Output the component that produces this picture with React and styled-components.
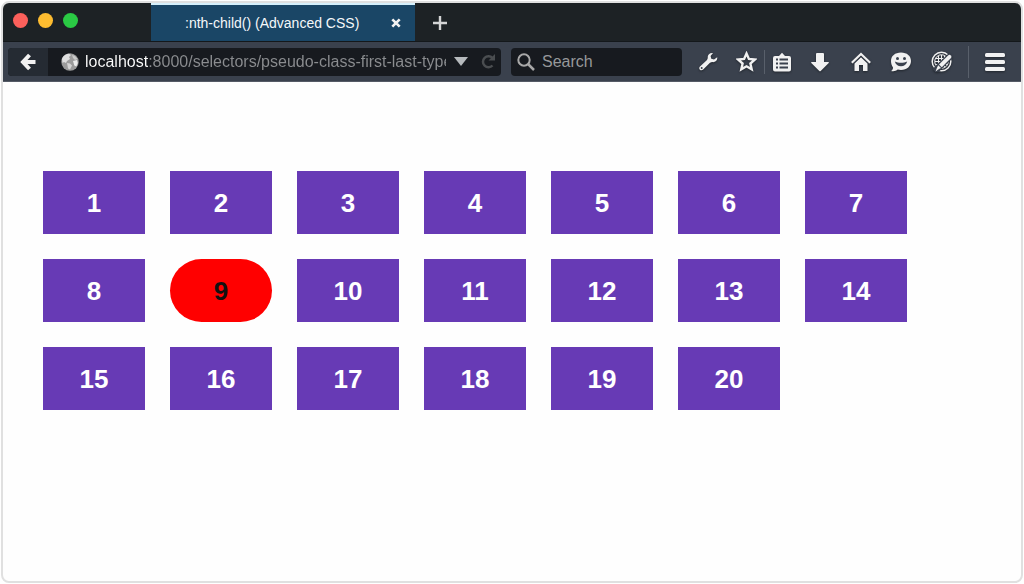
import React from "react";
import styled, { createGlobalStyle } from "styled-components";

const GlobalStyle = createGlobalStyle`
  *, *::before, *::after { box-sizing: border-box; }
  body {
    margin: 0;
    background: #fff;
    font-family: "Liberation Sans", Arial, sans-serif;
  }
  button, input { font: inherit; }
`;

const Window = styled.div`
  display: flex;
  flex-direction: column;
  min-height: calc(100vh - 2px);
  margin: 1px 1px;
  border: 2px solid #e0e0e0;
  border-radius: 8px;
  background: #fefefe;
  overflow: hidden;
`;

const TabStrip = styled.header`
  display: flex;
  height: 39px;
  background: #1d2225;
  border-bottom: 1px solid #14181b;
`;

const Lights = styled.div`
  display: flex;
  align-items: center;
  gap: 10px;
  width: 148px;
  padding: 0 0 4px 10px;
`;

const Light = styled.button`
  width: 15px;
  height: 15px;
  padding: 0;
  border: 0;
  border-radius: 50%;
  background: ${(p) => p.$color};
`;

const Tab = styled.div`
  display: flex;
  align-items: center;
  width: 264px;
  padding: 0 12px 0 34px;
  border-top: 2px solid #d5f0fc;
  background: #1a4666;
`;

const TabTitle = styled.span`
  flex: 1;
  color: #f4f8fa;
  font-size: 14px;
  line-height: 20px;
  white-space: nowrap;
`;

const PlainButton = styled.button`
  display: flex;
  align-items: center;
  justify-content: center;
  flex: none;
  width: ${(p) => p.$width}px;
  padding: 0;
  border: 0;
  background: none;
  color: ${(p) => p.$color || "#f1f1f1"};

  svg { display: block; flex: none; }
`;

const NewTabButton = styled(PlainButton)`
  padding-top: 2px;
`;

const Toolbar = styled.nav`
  display: flex;
  align-items: center;
  height: 40px;
  padding-left: 5px;
  background: #3a414d;
  border-bottom: 1px solid #555b66;
`;

const Location = styled.div`
  display: flex;
  flex: 1;
  min-width: 0;
  height: 28px;
  margin-right: 10px;
  border-radius: 4px;
  background: #171a1f;
  overflow: hidden;
`;

const BackButton = styled(PlainButton)`
  background: #252b33;
`;

const Address = styled.label`
  display: flex;
  align-items: center;
  flex: 1;
  min-width: 0;
  gap: 6px;
  padding-left: 13px;

  svg { flex: none; }
`;

const AddressInput = styled.input`
  flex: 1;
  min-width: 0;
  height: 28px;
  padding: 0;
  border: 0;
  outline: 0;
  background: linear-gradient(to right, #fff 63px, #8b8d90 63px);
  background-clip: text;
  -webkit-text-fill-color: transparent;
  font-size: 16px;
`;

const SearchBox = styled.label`
  display: flex;
  align-items: center;
  gap: 7px;
  width: 171px;
  height: 28px;
  padding-left: 6px;
  border-radius: 4px;
  background: #171a1f;

  svg { flex: none; }
`;

const SearchInput = styled.input`
  flex: 1;
  min-width: 0;
  padding: 0;
  border: 0;
  outline: 0;
  background: none;
  color: #ddd;
  font-size: 16px;

  &::placeholder { color: #96989a; opacity: 1; }
`;

const Tools = styled.div`
  display: flex;
  align-items: center;
  height: 100%;
  padding-left: 6px;

  svg { filter: drop-shadow(0 1px 1px #20252c); }
`;

const Divider = styled.span`
  width: 1px;
  height: ${(p) => p.$height}px;
  margin-left: ${(p) => p.$space || 0}px;
  background: #59606b;
`;

const Page = styled.main`
  flex: 1;
  padding: 89px 0 40px 40px;
`;

const Tiles = styled.ul`
  display: flex;
  flex-wrap: wrap;
  gap: 25px;
  margin: 0;
  padding: 0;
  list-style: none;
`;

const Tile = styled.li`
  display: flex;
  align-items: center;
  justify-content: center;
  width: 102px;
  height: 63px;
  background: #673ab5;
  color: #fff;
  font-size: 26px;
  font-weight: bold;
  line-height: 30px;

  &:nth-child(9) {
    border-radius: 32px;
    background: #f00;
    color: #111;
  }
`;

const CloseIcon = () => (
  <svg width="10" height="10" viewBox="0 0 10 10" stroke="currentColor" strokeWidth="2.600">
    <path d="M1.300 1.300l7.400 7.400M8.700 1.300l-7.400 7.400" />
  </svg>
);

const PlusIcon = () => (
  <svg width="14" height="14" viewBox="0 0 14 14" stroke="currentColor" strokeWidth="2.400">
    <path d="M7 0v14M0 7h14" />
  </svg>
);

const BackIcon = () => (
  <svg width="16" height="18" viewBox="0 0 16 18" fill="none" stroke="currentColor">
    <path d="M9.500 2L3 9l6.500 7" strokeWidth="4" />
    <path d="M3 9h12.500" strokeWidth="4" />
  </svg>
);

const GlobeIcon = () => (
  <svg width="18" height="18" viewBox="0 0 18 18">
    <circle cx="9" cy="9" r="8.700" fill="#9b9b9b" />
    <path d="M1 6C2 3 5 .8 8 .8L10 2 8 4 9 6 6 8 5 10 3 9 1.500 10z" fill="#dedede" />
    <path d="M11 2l3 1 2.500 3L14 7l-2-2z" fill="#c9c9c9" />
    <path d="M6 10l3 .5 2 2-2 4-2-1-.5-3z" fill="#d4d4d4" />
    <path d="M12 8l4-1 .8 3-1.500 3.500-2-1z" fill="#ececec" />
  </svg>
);

const CaretIcon = () => (
  <svg width="14" height="9" viewBox="0 0 14 9" fill="#b6babd">
    <path d="M0 0h14L7 9z" />
  </svg>
);

const ReloadIcon = () => (
  <svg width="15" height="15" viewBox="0 0 15 15">
    <path d="M11.500 4A5.500 5.500 0 1 0 11.500 11.500" fill="none" stroke="#4a4d50" strokeWidth="2.500" />
    <path d="M14 0v6.500H7.500z" fill="#4a4d50" />
  </svg>
);

const SearchIcon = () => (
  <svg width="18" height="18" viewBox="0 0 18 18" fill="none" stroke="#a8a8a8">
    <circle cx="7" cy="7" r="5.700" strokeWidth="2" />
    <path d="M11 11l6 6" strokeWidth="2.500" />
  </svg>
);

const WrenchIcon = () => (
  <svg width="20" height="20" viewBox="0 0 20 20">
    <path
      d="M15 1C11.800.4 9.200 2.800 9.800 6L9 7.900 2 14.400c-2.200 2.300.8 5.300 3.200 3.200L12 10.700l2-.6c3 .7 5.800-1.600 5.200-4.900l-3.200 2.300-2.700-.7-.7-2.700z"
      fill="currentColor"
    />
    <circle cx="3.700" cy="16.100" r="1" fill="#3a414d" />
  </svg>
);

const StarIcon = () => (
  <svg width="21" height="21" viewBox="0 0 21 21" fill="none" stroke="currentColor" strokeWidth="2.400">
    <path d="M10.500 2.600l2.400 5.400 5.900.6-4.400 3.900 1.300 5.900-5.200-3.100-5.200 3.100 1.300-5.900-4.400-3.900 5.900-.6z" />
  </svg>
);

const ListIcon = () => (
  <svg width="18" height="20" viewBox="0 0 18 20">
    <path d="M2 4h4L9 .8 12 4h4a2 2 0 0 1 2 2v11.500a2 2 0 0 1-2 2H2a2 2 0 0 1-2-2V6a2 2 0 0 1 2-2z" fill="currentColor" />
    <path d="M3 7.500h2M6.500 7.500H15M3 11.500h2M6.500 11.500H15M3 15.500h2M6.500 15.500H15" stroke="#3a414d" strokeWidth="2" />
  </svg>
);

const DownIcon = () => (
  <svg width="18" height="20" viewBox="0 0 18 20" fill="currentColor">
    <path d="M6 1h6a1 1 0 0 1 1 1v8h4.300q1 .2.400 1L9.700 19q-.7.600-1.400 0L.3 11q-.6-.8.400-1H5V2a1 1 0 0 1 1-1z" />
  </svg>
);

const HomeIcon = () => (
  <svg width="20" height="20" viewBox="0 0 20 20">
    <path d="M.8 10.800L10 2l9.200 8.800" fill="none" stroke="currentColor" strokeWidth="2.200" />
    <path d="M3.500 11.500L10 5.200l6.500 6.300V19H12v-6H8v6H3.500z" fill="currentColor" />
    <path d="M2 12l8-7.600 8 7.600" fill="none" stroke="#3a414d" strokeWidth=".9" />
  </svg>
);

const SmileIcon = () => (
  <svg width="22" height="20" viewBox="0 0 22 20">
    <path d="M11 .5c6 0 10 3.500 10 8.500s-4 9-10 9c-1.200 0-2.300-.1-3.300-.4C6 19.200 3.500 19.700 1 19c1.300-.8 2-2 2-3.600C1.700 13.800 1 11.500 1 9 1 4 5 .5 11 .5z" fill="currentColor" />
    <circle cx="7.500" cy="6.500" r="1.500" fill="#3a414d" />
    <circle cx="14.500" cy="6.500" r="1.500" fill="#3a414d" />
    <path d="M4.800 9.500c3.500 1.800 8.900 1.800 12.400 0-.7 3.200-3.200 4.700-6.200 4.700s-5.500-1.500-6.200-4.700z" fill="#3a414d" />
  </svg>
);

const GlobePencilIcon = () => (
  <svg width="21" height="21" viewBox="0 0 21 21">
    <g fill="none" stroke="currentColor">
      <circle cx="10.500" cy="10.500" r="9.300" strokeWidth="1.500" />
      <circle cx="10.500" cy="10.500" r="6.800" strokeWidth="1" />
      <path d="M4.500 7.500h12M4 10.500h13M5 13.500h11M7.500 5v11M10.500 4v13M13.500 5v11" strokeWidth="1.100" />
    </g>
    <path d="M20.500 4L8 16l-4 4.500" stroke="#3a414d" strokeWidth="6.500" fill="none" />
    <path d="M17.300 4.300q1.300-1 2.500.2t.2 2.500L10.800 16.300 8 13.500z" fill="currentColor" />
    <path d="M7.200 14.300l2.800 2.800-2 1-3.500 2.400 1.700-4.300z" fill="currentColor" />
  </svg>
);

const MenuIcon = () => (
  <svg width="20" height="18" viewBox="0 0 20 18" fill="currentColor">
    <rect y="0" width="20" height="4" rx="1.500" />
    <rect y="7" width="20" height="4" rx="1.500" />
    <rect y="14" width="20" height="4" rx="1.500" />
  </svg>
);

const lights = [
  ["Close window", "#fc605b"],
  ["Minimize window", "#fdbc30"],
  ["Zoom window", "#2aca44"],
];

const tools = [
  ["Developer tools", 40, WrenchIcon],
  ["Bookmark this page", 36, StarIcon],
  null,
  ["Show bookmarks", 33, ListIcon],
  ["Downloads", 44, DownIcon],
  ["Home", 38, HomeIcon],
  ["Chat", 42, SmileIcon],
  ["Web inspector", 38, GlobePencilIcon],
];

const numbers = Array.from({ length: 20 }, (_, i) => i + 1);

export default function App() {
  return (
    <>
      <GlobalStyle />
      <Window>
        <TabStrip>
          <Lights>
            {lights.map(([label, color]) => (
              <Light key={label} aria-label={label} $color={color} />
            ))}
          </Lights>
          <Tab>
            <TabTitle>:nth-child() (Advanced CSS)</TabTitle>
            <PlainButton aria-label="Close tab" $width={14}><CloseIcon /></PlainButton>
          </Tab>
          <NewTabButton aria-label="New tab" $width={50} $color="#d4d5d6"><PlusIcon /></NewTabButton>
        </TabStrip>
        <Toolbar>
          <Location>
            <BackButton aria-label="Back" $width={40}><BackIcon /></BackButton>
            <Address>
              <GlobeIcon />
              <AddressInput aria-label="Address" defaultValue="localhost:8000/selectors/pseudo-class-first-last-type" />
            </Address>
            <PlainButton aria-label="Show history" $width={30}><CaretIcon /></PlainButton>
            <PlainButton aria-label="Reload" $width={25}><ReloadIcon /></PlainButton>
          </Location>
          <SearchBox>
            <SearchIcon />
            <SearchInput aria-label="Search" placeholder="Search" />
          </SearchBox>
          <Tools>
            {tools.map((tool) => {
              if (!tool) return <Divider key="divider" $height={24} />;
              const [label, width, Icon] = tool;
              return (
                <PlainButton key={label} aria-label={label} $width={width}><Icon /></PlainButton>
              );
            })}
            <Divider $height={32} $space={8} />
            <PlainButton aria-label="Open menu" $width={52}><MenuIcon /></PlainButton>
          </Tools>
        </Toolbar>
        <Page>
          <Tiles>
            {numbers.map((n) => <Tile key={n}>{n}</Tile>)}
          </Tiles>
        </Page>
      </Window>
    </>
  );
}
